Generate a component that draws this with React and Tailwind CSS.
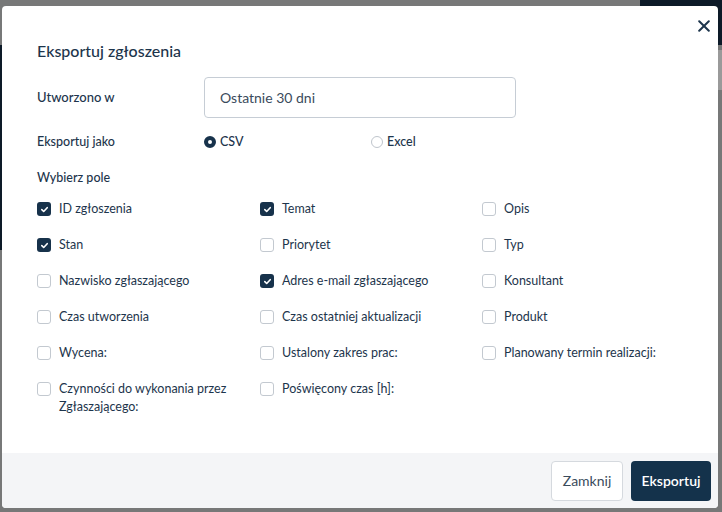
import React from "react";

const fields = [
  [
    { label: "ID zgłoszenia", checked: true },
    { label: "Temat", checked: true },
    { label: "Opis", checked: false },
  ],
  [
    { label: "Stan", checked: true },
    { label: "Priorytet", checked: false },
    { label: "Typ", checked: false },
  ],
  [
    { label: "Nazwisko zgłaszającego", checked: false },
    { label: "Adres e-mail zgłaszającego", checked: true },
    { label: "Konsultant", checked: false },
  ],
  [
    { label: "Czas utworzenia", checked: false },
    { label: "Czas ostatniej aktualizacji", checked: false },
    { label: "Produkt", checked: false },
  ],
  [
    { label: "Wycena:", checked: false },
    { label: "Ustalony zakres prac:", checked: false },
    { label: "Planowany termin realizacji:", checked: false },
  ],
  [
    { label: "Czynności do wykonania przez Zgłaszającego:", checked: false },
    { label: "Poświęcony czas [h]:", checked: false },
    null,
  ],
];

function Checkbox({ checked }) {
  return checked ? (
    <span className="mt-[2px] flex h-[14px] w-[14px] shrink-0 items-center justify-center rounded-[3px] bg-[#17324b]">
      <svg width="9" height="9" viewBox="0 0 10 10" fill="none">
        <path d="M2 5.2 L4.1 7.2 L8 3" stroke="white" strokeWidth="1.8" strokeLinecap="round" strokeLinejoin="round" />
      </svg>
    </span>
  ) : (
    <span className="mt-[2px] h-[14px] w-[14px] shrink-0 rounded-[3px] border border-[#c3c9d0] bg-white" />
  );
}

export default function App() {
  return (
    <div
      className="relative h-[512px] w-[722px] overflow-hidden bg-[#777878]"
      style={{ fontFamily: "Lato, 'Noto Sans', sans-serif" }}
    >
      {/* backdrop decoration */}
      <div className="absolute right-0 top-0 h-[45px] w-[82px] bg-[#0d1a28]" />
      <div className="absolute left-0 top-[45px] h-[205px] w-[4px] bg-[#0d1a28]" />
      <div className="absolute right-0 top-[50px] h-[40px] w-[4px] bg-[#9a9a9a]" />

      <div className="relative ml-[2px] mt-[6px] flex h-[502px] w-[716px] flex-col overflow-hidden rounded-[4px] bg-white text-[#1d354c]">
        <button className="absolute right-[2px] top-[8px] flex h-[24px] w-[24px] items-center justify-center">
          <svg width="12" height="12" viewBox="0 0 12 12" fill="none">
            <path d="M1.2 1.2 L10.8 10.8 M10.8 1.2 L1.2 10.8" stroke="#1d354c" strokeWidth="2" strokeLinecap="round" />
          </svg>
        </button>

        <div className="flex flex-1 flex-col px-[35px] pt-[34px]">
          <h2 className="text-[16px] leading-[22px] font-medium">Eksportuj zgłoszenia</h2>

          <div className="mt-[15px] flex items-center">
            <div className="w-[167px] text-[13px] font-medium">Utworzono w</div>
            <div className="flex h-[41px] w-[312px] items-center rounded-[4px] border border-[#c6cdd5] px-[15px] text-[14px] text-[#3a4b5c]">
              Ostatnie 30 dni
            </div>
          </div>

          <div className="mt-[14px] flex h-[20px] items-center">
            <div className="w-[167px] text-[12.5px] font-medium">Eksportuj jako</div>
            <div className="flex w-[167px] items-center gap-[4px]">
              <span className="h-[12px] w-[12px] rounded-full border-[4px] border-[#17324b] bg-white" />
              <span className="text-[12.5px] font-medium">CSV</span>
            </div>
            <div className="flex items-center gap-[4px]">
              <span className="h-[12px] w-[12px] rounded-full border border-[#bfc5cc] bg-white" />
              <span className="text-[12.5px] font-medium">Excel</span>
            </div>
          </div>

          <div className="mt-[16px] text-[12.5px] font-medium leading-[20px]">Wybierz pole</div>

          <div className="mt-[12px] flex flex-col gap-[18px]">
            {fields.map((row, i) => (
              <div key={i} className="grid grid-cols-[223px_222px_1fr]">
                {row.map((f, j) =>
                  f ? (
                    <label key={j} className="flex items-start gap-[8px] pr-[20px] text-[12.5px] leading-[18px]">
                      <Checkbox checked={f.checked} />
                      <span>{f.label}</span>
                    </label>
                  ) : (
                    <div key={j} />
                  )
                )}
              </div>
            ))}
          </div>
        </div>

        <div className="flex h-[55px] items-center justify-end gap-[8px] bg-[#f4f5f7] pr-[7px]">
          <button className="h-[40px] w-[72px] rounded-[4px] border border-[#d5d9de] bg-white text-[14px] text-[#3a4b5c]">
            Zamknij
          </button>
          <button className="h-[40px] w-[80px] rounded-[4px] bg-[#14324b] text-[14px] font-semibold text-white">
            Eksportuj
          </button>
        </div>
      </div>
    </div>
  );
}
